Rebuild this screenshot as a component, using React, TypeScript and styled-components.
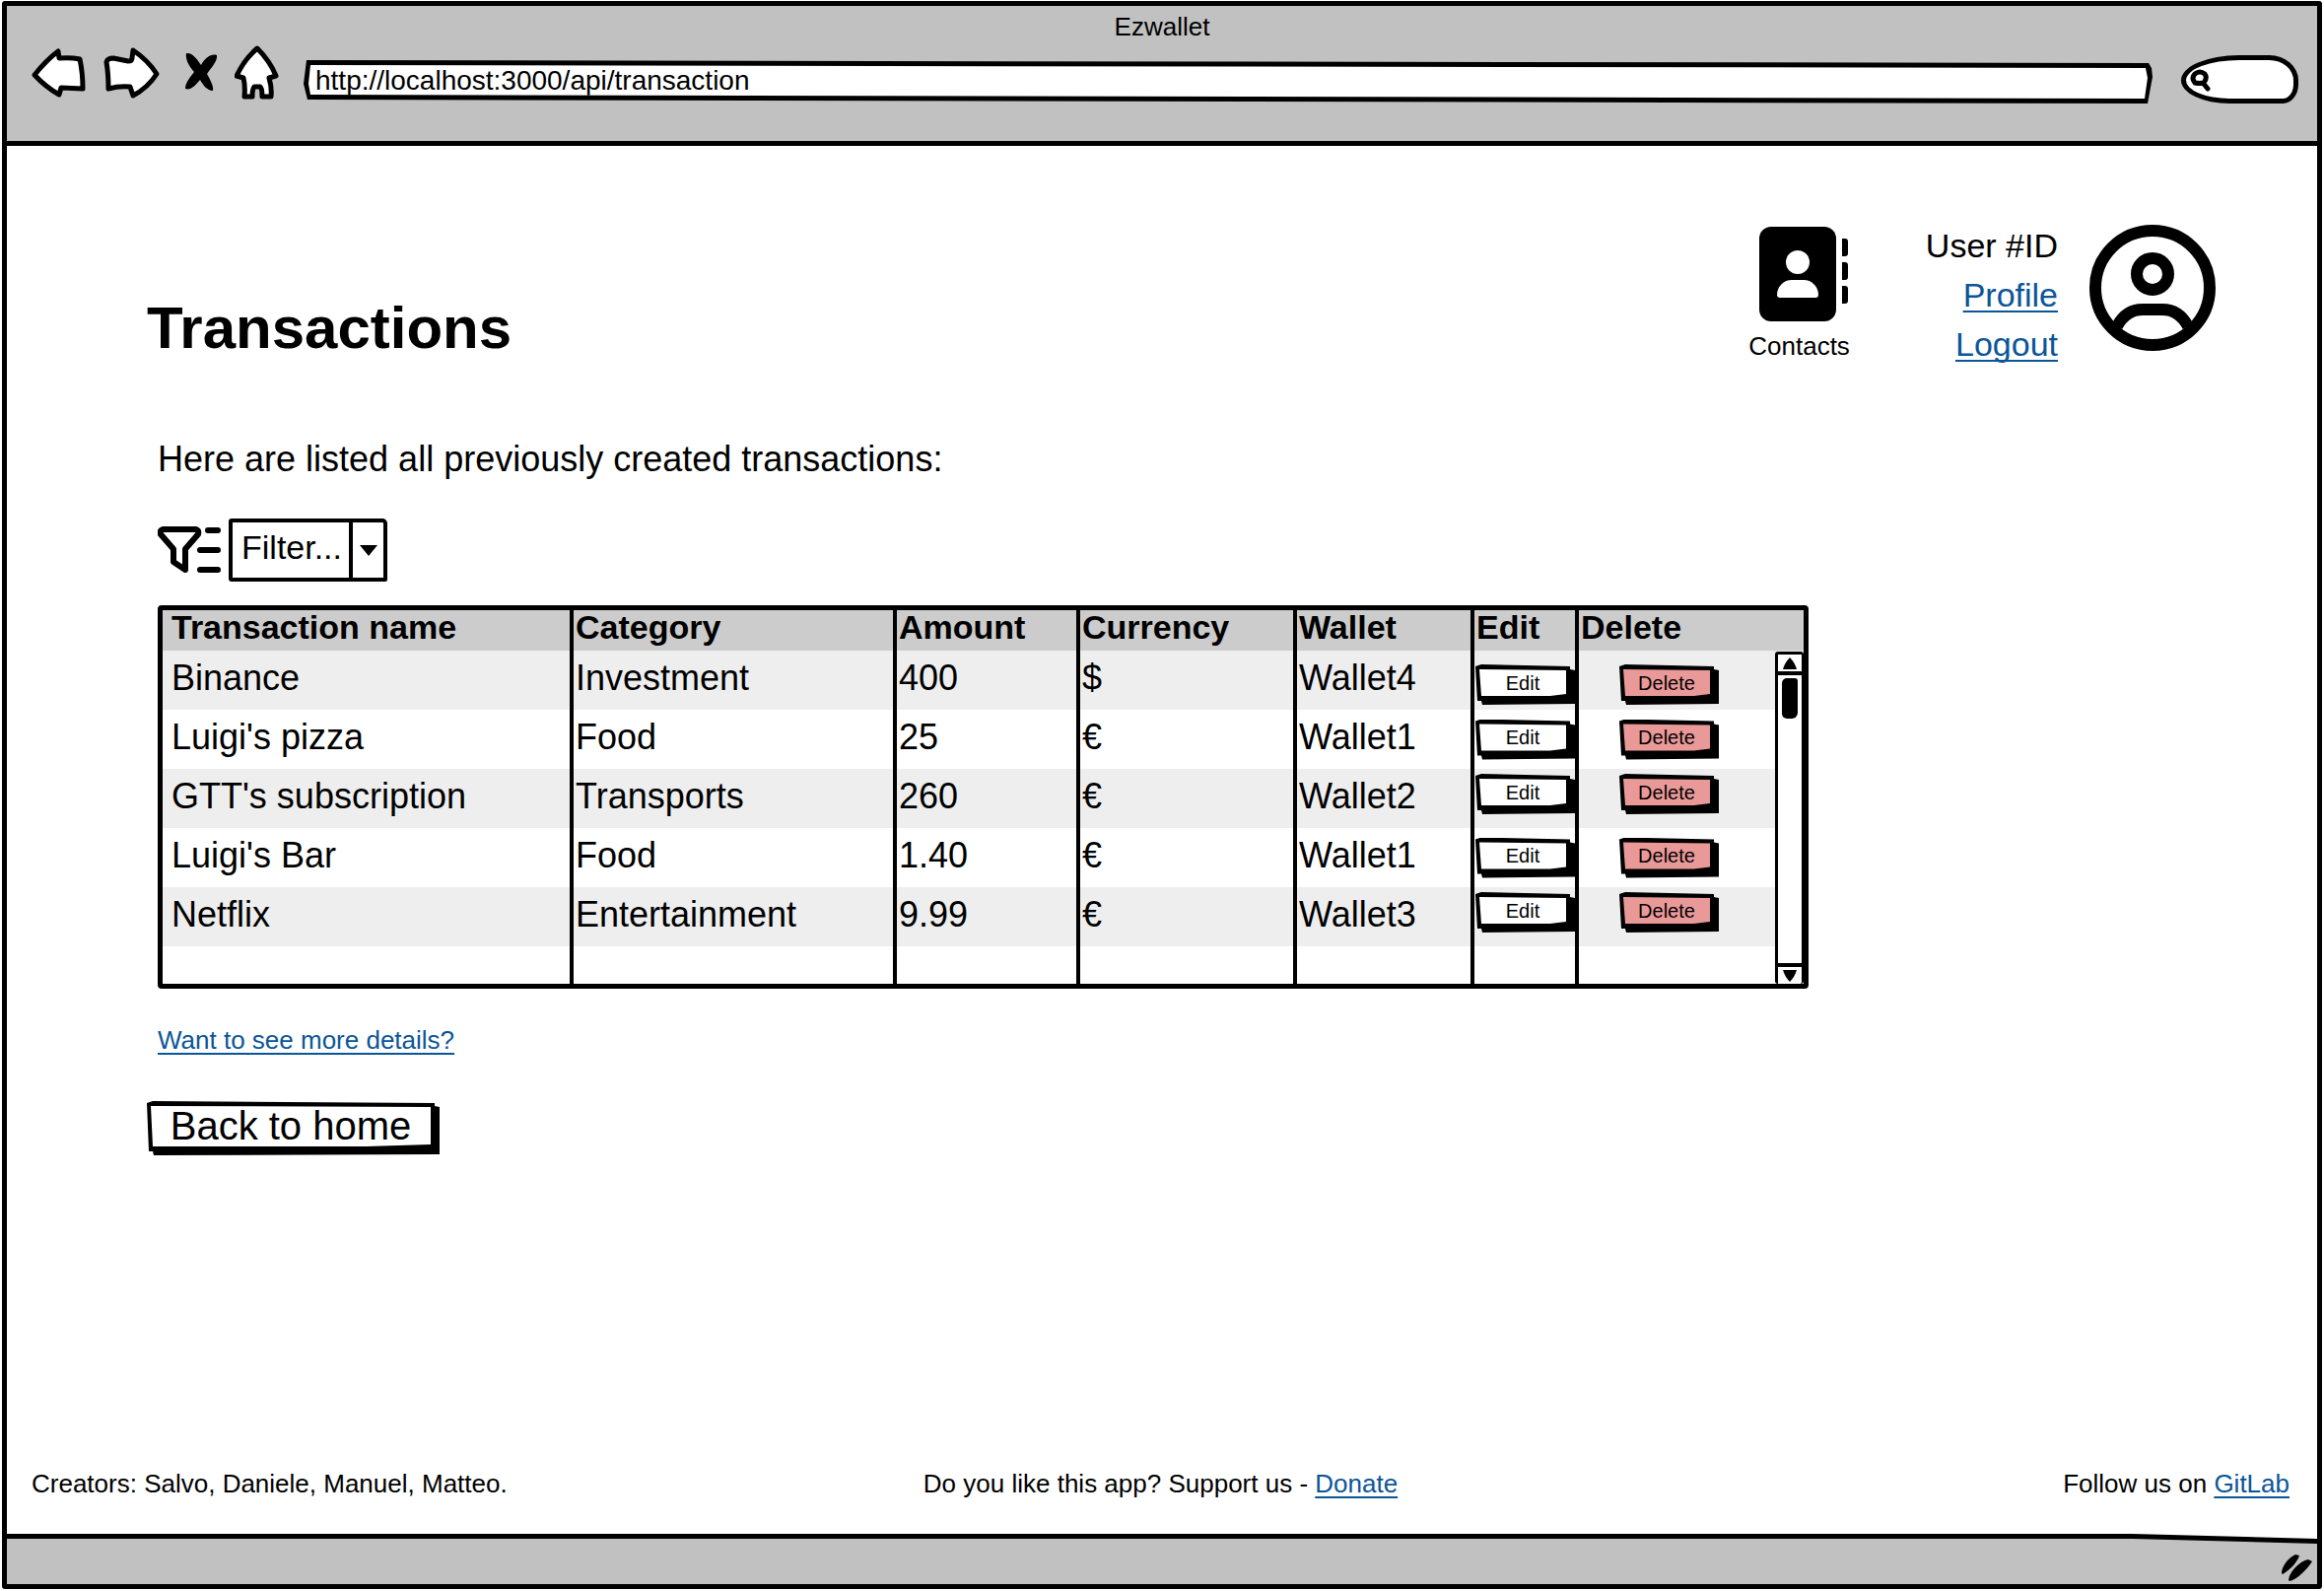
import React from "react";
import styled, { createGlobalStyle } from "styled-components";

const INK = "#000";
const CHROME = "#c1c1c1";
const LINK = "#0b5599";

const GlobalStyle = createGlobalStyle`
  *, *::before, *::after { box-sizing: border-box; }
  body {
    margin: 0;
    background: #fff;
    color: ${INK};
    font-family: "Liberation Sans", Arial, sans-serif;
  }
  button, input, select { font-family: inherit; color: inherit; }
  svg { display: block; }
`;

/* ---------- window ---------- */

const Page = styled.div`
  padding: 1px 2px 2px;
`;

const Window = styled.div`
  display: flex;
  flex-direction: column;
  min-height: calc(100vh - 3px);
  border: 5px solid ${INK};
  border-radius: 3px;
`;

const Chrome = styled.header`
  height: 142px;
  padding-top: 6px;
  background: ${CHROME};
  border-bottom: 5px solid ${INK};
`;

const WindowTitle = styled.div`
  font-size: 26px;
  line-height: 30px;
  text-align: center;
`;

const NavRow = styled.div`
  display: flex;
  align-items: flex-end;
  height: 60px;
  margin-top: 3px;
  padding: 0 19px 0 25px;
`;

const NavButtons = styled.nav`
  display: flex;
  align-items: center;
  align-self: flex-start;
  gap: 16px;
  height: 58px;
  margin-right: 24px;
`;

const IconButton = styled.button`
  padding: 0;
  border: 0;
  background: none;
  cursor: pointer;
`;

const UrlField = styled.label`
  flex: 1;
  height: 44px;
  background: ${INK};
  clip-path: polygon(
    3px 0,
    calc(100% - 4px) 3px,
    calc(100% - 1px) 8px,
    100% 17px,
    calc(100% - 5px) 100%,
    4px 40px,
    0 24px
  );
`;

const UrlInput = styled.input`
  display: block;
  width: 100%;
  height: 44px;
  padding: 0 12px 3px;
  border: 0;
  outline: 0;
  background: #fff;
  font-size: 28px;
  clip-path: polygon(
    7px 5px,
    calc(100% - 7px) 8px,
    calc(100% - 5px) 18px,
    calc(100% - 8px) 39px,
    7px 35px,
    5px 24px
  );
`;

const SearchField = styled.label`
  display: flex;
  align-items: center;
  width: 119px;
  height: 49px;
  margin-left: 29px;
  padding-left: 4px;
  border: 5px solid ${INK};
  border-radius: 60px 30px 16px 50px / 26px 26px 20px 24px;
  background: #fff;
`;

const SearchInput = styled.input`
  flex: 1;
  min-width: 0;
  border: 0;
  outline: 0;
  background: none;
  font-size: 20px;
`;

const StatusBar = styled.div`
  display: flex;
  justify-content: flex-end;
  position: relative;
  isolation: isolate;
  height: 51px;
  padding: 20px 4px 0 0;
  background: ${INK};
  clip-path: polygon(0 0, 92% 0, 100% 5px, 100% 100%, 0 100%);

  &::before {
    content: "";
    position: absolute;
    inset: 5px 0 0;
    z-index: -1;
    background: ${CHROME};
    clip-path: polygon(0 0, 92% 0, 100% 5px, 100% 100%, 0 100%);
  }
`;

/* ---------- page content ---------- */

const Main = styled.main`
  flex: 1;
  padding: 76px 103px 40px 142px;
`;

const TopRow = styled.div`
  display: flex;
  align-items: flex-end;
  justify-content: space-between;
`;

const Heading = styled.h1`
  margin: 0;
  font-size: 60px;
  line-height: 82px;
`;

const Account = styled.div`
  display: flex;
  align-items: center;
`;

const Contacts = styled.a`
  display: flex;
  flex-direction: column;
  align-items: center;
  gap: 8px;
  margin-right: 77px;
  color: inherit;
  font-size: 26px;
  line-height: 34px;
  text-decoration: none;
`;

const UserLinks = styled.div`
  display: flex;
  flex-direction: column;
  align-items: flex-end;
  margin-right: 32px;
  font-size: 34px;
  line-height: 50px;
`;

const Avatar = styled.div`
  align-self: flex-start;
  padding-top: 4px;
`;

const Link = styled.a`
  color: ${LINK};
  text-decoration: underline;
  text-decoration-thickness: 2px;
  text-underline-offset: 4px;
  text-decoration-skip-ink: none;
`;

const Section = styled.section`
  padding-left: 11px;
`;

const Intro = styled.p`
  margin: 68px 0 36px;
  font-size: 36px;
  line-height: 48px;
`;

const FilterRow = styled.div`
  display: flex;
  align-items: center;
  gap: 8px;
  margin-bottom: 24px;
`;

const SelectBox = styled.div`
  display: flex;
  width: 161px;
  height: 64px;
  position: relative;
  border: 4px solid ${INK};
  border-radius: 3px 5px 2px 3px;
`;

const Select = styled.select`
  width: 100%;
  padding: 0 36px 6px 9px;
  appearance: none;
  border: 0;
  outline: 0;
  background: none;
  font-size: 34px;
`;

const SelectArrow = styled.span`
  display: grid;
  place-items: center;
  position: absolute;
  top: 0;
  right: 0;
  bottom: 0;
  width: 35px;
  border-left: 4px solid ${INK};
  pointer-events: none;
`;

/* ---------- table ---------- */

const TableFrame = styled.div`
  position: relative;
  width: 100%;
  max-width: 1675px;
  border: 5px solid ${INK};
  border-radius: 4px;
`;

const Table = styled.table`
  width: 100%;
  table-layout: fixed;
  border-spacing: 0;
  font-size: 36px;
  line-height: 40px;
`;

const Col = styled.col<{ $share?: number }>`
  width: ${(p) => (p.$share ? `${p.$share}px` : "auto")};
`;

const Th = styled.th`
  height: 41px;
  padding: 0 0 7px 2px;
  background: #ccc;
  font-size: 34px;
  line-height: 34px;
  text-align: left;
  &:first-child { padding-left: 9px; }
  &:not(:last-child) { border-right: 4px solid ${INK}; }
`;

const Row = styled.tr<{ $spare?: boolean }>`
  height: ${(p) => (p.$spare ? 38 : 60)}px;
  &:nth-child(odd) { background: #eee; }
`;

const Td = styled.td`
  padding: 0 0 4px 2px;
  &:first-child { padding-left: 9px; }
  &:not(:last-child) { border-right: 4px solid ${INK}; }
`;

type Place = "top" | "middle" | "bottom";

const ActionTd = styled(Td)<{ $place: Place; $indent: number }>`
  padding: 5px 0 5px ${(p) => p.$indent}px;
  vertical-align: ${(p) => p.$place};
`;

const SketchButton = styled.button<{ $fill?: string; $large?: boolean }>`
  display: flex;
  align-items: center;
  justify-content: center;
  position: relative;
  isolation: isolate;
  width: ${(p) => (p.$large ? 297 : 101)}px;
  height: ${(p) => (p.$large ? 55 : 41)}px;
  padding: 0 9px ${(p) => (p.$large ? 6 : 4)}px 4px;
  border: 0;
  background: none;
  font-size: ${(p) => (p.$large ? 40 : 20)}px;
  line-height: 1;
  cursor: pointer;

  &::before, &::after {
    content: "";
    position: absolute;
    inset: 0;
  }
  &::before {
    z-index: -2;
    background: ${INK};
    clip-path: polygon(
      0 2px, 6px 0, calc(100% - 5px) 2px, calc(100% - 5px) 5px, 100% 6px,
      100% calc(100% - 1px), 7px 100%, 6px calc(100% - 4px), 2px calc(100% - 4px)
    );
  }
  &::after {
    z-index: -1;
    background: ${(p) => p.$fill ?? "#fff"};
    clip-path: polygon(
      4px 5px, calc(100% - 9px) 6px, calc(100% - 9px) calc(100% - 11px),
      75% calc(100% - 9px), 6px calc(100% - 9px)
    );
  }
`;

const ScrollBar = styled.div`
  display: flex;
  flex-direction: column;
  position: absolute;
  top: 42px;
  right: 0;
  bottom: 0;
  width: 29px;
  border: solid ${INK};
  border-width: 3px 2px 0 3px;
  border-radius: 3px;
  background: #fff;
`;

const ScrollButton = styled(IconButton)`
  display: grid;
  place-items: center;
  height: 17px;
`;

const ScrollTrack = styled.div`
  flex: 1;
  padding: 3px 4px;
  border: solid ${INK};
  border-width: 4px 0;
`;

const ScrollThumb = styled.div`
  width: 16px;
  height: 41px;
  border-radius: 5px 3px 6px 5px;
  background: ${INK};
`;

const Details = styled.p`
  margin: 35px 0 45px;
  font-size: 26px;
  line-height: 34px;
`;

const Footer = styled.footer`
  display: grid;
  grid-template-columns: 1fr auto 1fr;
  padding: 0 28px 34px 25px;
  font-size: 26px;
  line-height: 34px;
  & > :last-child { text-align: right; }
`;

/* ---------- icons ---------- */

const outline = {
  fill: "#fff",
  stroke: INK,
  strokeWidth: 5,
  strokeLinejoin: "round" as const,
};

const BackIcon = () => (
  <svg width="56" height="52" viewBox="0 0 56 52" aria-hidden="true">
    <path {...outline} d="M3 28Q15 13 27 4L28 11Q40 10 49 12Q52 26 52 42L30 41L28 48Q14 40 3 28Z" />
  </svg>
);

const ForwardIcon = () => (
  <svg width="58" height="54" viewBox="-1 0 58 54" aria-hidden="true">
    <path {...outline} d="M3 16Q4 12 10 12L25 15Q29 15 29 12L30 4Q45 14 54 28Q45 42 30 50L27 41Q16 40 5 43Q5 28 3 16Z" />
  </svg>
);

const StopIcon = () => (
  <svg width="44" height="42" viewBox="-8 1 44 42" aria-hidden="true">
    <path d="M3 2C9 1 14 8 18 14C22 7 28 2 34 4C35 10 28 17 24 23C28 30 31 36 30 40C24 40 20 34 17 29C12 35 7 40 2 38C2 32 7 26 11 21C5 14 2 8 3 2Z" />
  </svg>
);

const HomeIcon = () => (
  <svg width="46" height="58" viewBox="2 0 46 58" aria-hidden="true">
    <path {...outline} d="M25 4Q38 17 44 32L37 34Q40 44 39 53L30 53Q30 44 28 43L22 43Q20 45 20 53L12 53Q13 42 11 34L4 32Q12 15 25 4Z" />
  </svg>
);

const SearchIcon = () => (
  <svg width="22" height="24" viewBox="0 0 22 24" fill="none" stroke={INK} strokeWidth="5" strokeLinecap="round" aria-hidden="true">
    <path d="M5 15Q1 10 5 6Q10 2 15 6Q18 10 14 15Q10 16 5 15ZM14 16L18 21" />
  </svg>
);

const GripIcon = () => (
  <svg width="34" height="28" viewBox="0 0 34 28" aria-hidden="true">
    <path d="M2 20C2 13 9 4 16 1L20 2C18 9 10 17 3 21ZM9 27C10 18 20 8 29 6L33 8C28 16 18 26 10 28Z" />
  </svg>
);

const ContactsIcon = () => (
  <svg width="100" height="96" viewBox="-9 0 100 96" aria-hidden="true">
    <rect width="78" height="96" rx="12" />
    <path d="M84 12h3q3 0 3 3v12q0 3-3 3h-3zM84 36h3q3 0 3 3v12q0 3-3 3h-3zM84 60h3q3 0 3 3v12q0 3-3 3h-3z" />
    <circle cx="39" cy="36" r="12" fill="#fff" />
    <path fill="#fff" d="M18 69a15 15 0 0 1 15-15h12a15 15 0 0 1 15 15q0 3-3 3H21q-3 0-3-3z" />
  </svg>
);

const AvatarIcon = () => (
  <svg width="128" height="128" viewBox="0 0 128 128" fill="none" stroke={INK} strokeWidth="12" role="img" aria-label="User">
    <circle cx="64" cy="64" r="58" />
    <circle cx="64" cy="50" r="16" />
    <path d="M28 103Q37 86 54 86H74Q91 86 100 103" />
  </svg>
);

const FilterIcon = () => (
  <svg width="64" height="48" viewBox="0 0 64 48" fill="none" stroke={INK} strokeWidth="6" strokeLinecap="round" strokeLinejoin="round" aria-hidden="true">
    <path d="M5 3H39Q42 4 41 8L28 23V44L16 36V23L3 8Q2 4 5 3Z" />
    <path d="M51 4H61M43 24H61M43 44H61" />
  </svg>
);

const Triangle = ({ up, wide }: { up?: boolean; wide?: boolean }) => (
  <svg width={wide ? 18 : 14} height={wide ? 11 : 12} viewBox="0 0 14 12" preserveAspectRatio="none" aria-hidden="true">
    <path d={up ? "M7 0Q12 5 14 12H0Q2 5 7 0Z" : wide ? "M0 0H14L7 12Z" : "M0 0H14Q12 7 7 12Q2 7 0 0Z"} />
  </svg>
);

/* ---------- data ---------- */

const columns: { label: string; width?: number }[] = [
  { label: "Transaction name", width: 417 },
  { label: "Category", width: 328 },
  { label: "Amount", width: 186 },
  { label: "Currency", width: 220 },
  { label: "Wallet", width: 180 },
  { label: "Edit", width: 106 },
  { label: "Delete" },
];

const transactions: { cells: string[]; place: Place }[] = [
  { cells: ["Binance", "Investment", "400", "$", "Wallet4"], place: "bottom" },
  { cells: ["Luigi's pizza", "Food", "25", "€", "Wallet1"], place: "middle" },
  { cells: ["GTT's subscription", "Transports", "260", "€", "Wallet2"], place: "top" },
  { cells: ["Luigi's Bar", "Food", "1.40", "€", "Wallet1"], place: "middle" },
  { cells: ["Netflix", "Entertainment", "9.99", "€", "Wallet3"], place: "top" },
];

export default function App() {
  return (
    <Page>
      <GlobalStyle />
      <Window>
        <Chrome>
          <WindowTitle>Ezwallet</WindowTitle>
          <NavRow>
            <NavButtons aria-label="Browser">
              <IconButton aria-label="Back"><BackIcon /></IconButton>
              <IconButton aria-label="Forward"><ForwardIcon /></IconButton>
              <IconButton aria-label="Stop"><StopIcon /></IconButton>
              <IconButton aria-label="Home"><HomeIcon /></IconButton>
            </NavButtons>
            <UrlField>
              <UrlInput aria-label="Address" defaultValue="http://localhost:3000/api/transaction" />
            </UrlField>
            <SearchField>
              <SearchIcon />
              <SearchInput type="search" aria-label="Search" />
            </SearchField>
          </NavRow>
        </Chrome>

        <Main>
          <TopRow>
            <Heading>Transactions</Heading>
            <Account>
              <Contacts href="#contacts">
                <ContactsIcon />
                Contacts
              </Contacts>
              <UserLinks>
                <span>User #ID</span>
                <Link href="#profile">Profile</Link>
                <Link href="#logout">Logout</Link>
              </UserLinks>
              <Avatar><AvatarIcon /></Avatar>
            </Account>
          </TopRow>

          <Section>
            <Intro>Here are listed all previously created transactions:</Intro>
            <FilterRow>
              <FilterIcon />
              <SelectBox>
                <Select aria-label="Filter transactions">
                  <option>Filter...</option>
                </Select>
                <SelectArrow><Triangle wide /></SelectArrow>
              </SelectBox>
            </FilterRow>

            <TableFrame>
              <Table>
                <colgroup>
                  {columns.map((c) => <Col key={c.label} $share={c.width} />)}
                </colgroup>
                <thead>
                  <tr>{columns.map((c) => <Th key={c.label} scope="col">{c.label}</Th>)}</tr>
                </thead>
                <tbody>
                  {transactions.map((t) => (
                    <Row key={t.cells[0]}>
                      {t.cells.map((text, i) => <Td key={i}>{text}</Td>)}
                      <ActionTd $place={t.place} $indent={1}>
                        <SketchButton>Edit</SketchButton>
                      </ActionTd>
                      <ActionTd $place={t.place} $indent={41}>
                        <SketchButton $fill="#ea9999">Delete</SketchButton>
                      </ActionTd>
                    </Row>
                  ))}
                  <Row $spare>
                    {columns.map((c) => <Td key={c.label} />)}
                  </Row>
                </tbody>
              </Table>
              <ScrollBar>
                <ScrollButton aria-label="Scroll up"><Triangle up /></ScrollButton>
                <ScrollTrack><ScrollThumb /></ScrollTrack>
                <ScrollButton aria-label="Scroll down"><Triangle /></ScrollButton>
              </ScrollBar>
            </TableFrame>

            <Details><Link href="#details">Want to see more details?</Link></Details>
          </Section>
          <SketchButton $large>Back to home</SketchButton>
        </Main>

        <Footer>
          <span>Creators: Salvo, Daniele, Manuel, Matteo.</span>
          <span>Do you like this app? Support us - <Link href="#donate">Donate</Link></span>
          <span>Follow us on <Link href="#gitlab">GitLab</Link></span>
        </Footer>
        <StatusBar><GripIcon /></StatusBar>
      </Window>
    </Page>
  );
}
